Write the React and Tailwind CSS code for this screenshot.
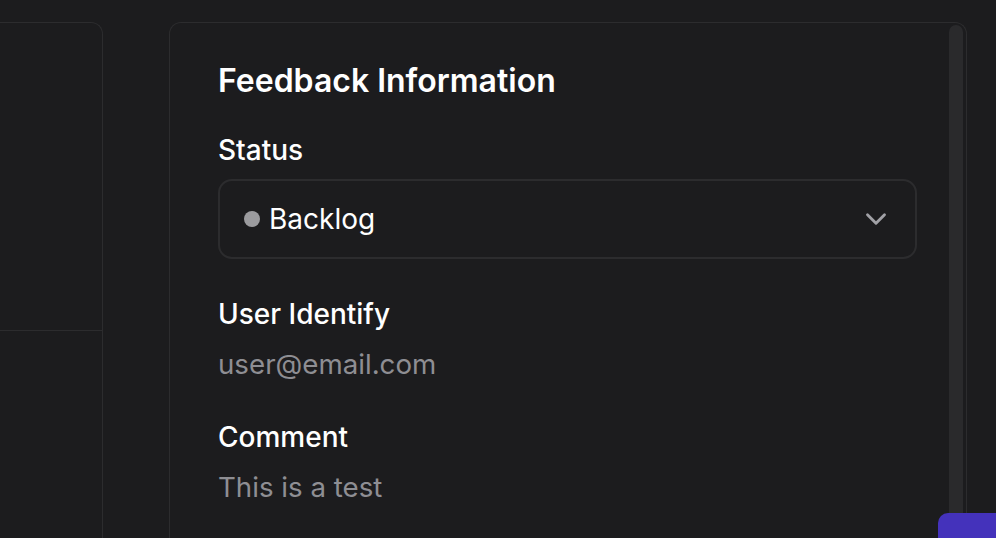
import React from 'react';
import { ChevronDown } from 'lucide-react';

export default function App() {
  return (
    <div className="relative flex h-[538px] w-[996px] overflow-hidden bg-[#1c1c1e] pt-[22px] font-['Inter',sans-serif] text-white">
      {/* Left panel (cut off) */}
      <div className="flex w-[103px] shrink-0 flex-col rounded-tr-xl border-t border-r border-[#2c2c2e]">
        <div className="h-[308px] border-b border-[#2c2c2e]" />
        <div className="flex-1" />
      </div>

      {/* Feedback panel */}
      <div className="ml-[66px] flex w-[798px] shrink-0 rounded-t-xl border-x border-t border-[#2c2c2e]">
        <div className="flex-1 pl-[48px] pr-[32px] pt-[38px]">
          <h2 className="text-[32px] font-semibold leading-[40px]">Feedback Information</h2>

          <div className="mt-[31px] text-[28px] font-medium leading-[36px]">Status</div>
          <button className="mt-[11px] flex h-[80px] w-full items-center justify-between rounded-[14px] border-2 border-[#2c2c2e] pl-[24px] pr-[22px]">
            <span className="flex items-center gap-[9px]">
              <span className="h-[16px] w-[16px] rounded-full bg-[#9b9b9e]" />
              <span className="text-[28px] leading-[36px]">Backlog</span>
            </span>
            <ChevronDown size={34} strokeWidth={2} className="text-[#a1a1a6]" />
          </button>

          <div className="mt-[37px] text-[28px] font-medium leading-[36px]">User Identify</div>
          <div className="mt-[14px] text-[27.7px] leading-[36px] text-[#8e8e93]">user@email.com</div>

          <div className="mt-[37px] text-[28px] font-medium leading-[36px]">Comment</div>
          <div className="mt-[14px] text-[27.7px] leading-[36px] text-[#8e8e93]">This is a test</div>
        </div>

        {/* scrollbar */}
        <div className="mr-[3px] mt-[2px] w-[14px] rounded-t-full bg-[#2a2a2c]" />
      </div>

      {/* floating action button */}
      <div className="absolute left-[938px] top-[513px] h-[60px] w-[80px] rounded-[10px] bg-[#4432bb]" />
    </div>
  );
}
